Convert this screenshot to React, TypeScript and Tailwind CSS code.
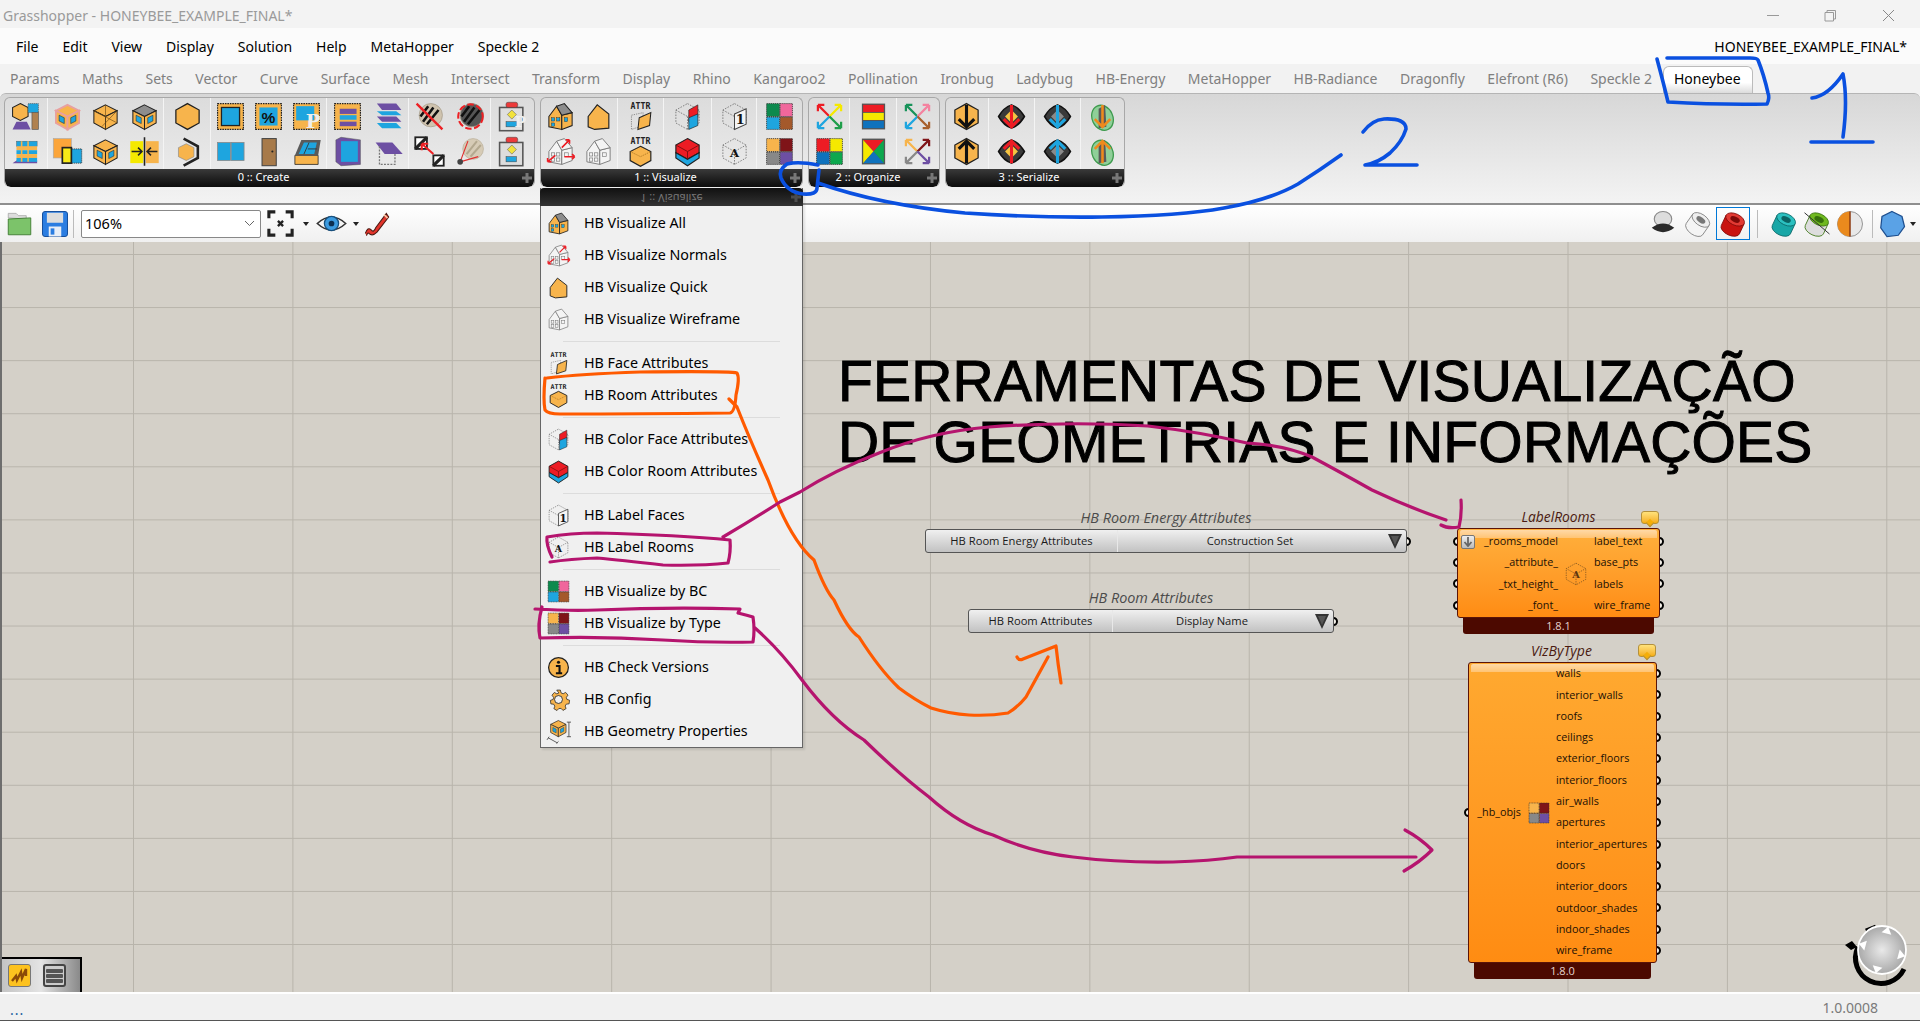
import React from "react";

const O = "#f7b44c", B = "#1ea5df", P = "#6d4fa3", K = "#222";
type N = React.ReactNode;
const Svg = ({ s = 31, children }: { s?: number; children: N }) => (
  <svg width={s} height={s} viewBox="0 0 24 24" className="shrink-0">{children}</svg>
);
const HEX = "12,2 21,7 21,17 12,22 3,17 3,7";
const Hex = ({ f = O, dash = false }: { f?: string; dash?: boolean }) => (
  <polygon points={HEX} fill={f} stroke={K} strokeWidth={dash ? 0.6 : 1} strokeDasharray={dash ? "1 1" : undefined} />
);
const Cube = ({ t = O, l = O, r = O, win = true, pink = false }: { t?: string; l?: string; r?: string; win?: boolean; pink?: boolean }) => (
  <g stroke={pink ? "#e8a0a0" : K} strokeWidth={pink ? 1.4 : 0.8}>
    <polygon points="12,3 21,7.5 12,12 3,7.5" fill={t} />
    <polygon points="3,7.5 12,12 12,22 3,17" fill={l} />
    <polygon points="21,7.5 12,12 12,22 21,17" fill={r} />
    {win && <polygon points="5.5,11 9.5,13 9.5,17.5 5.5,15.5" fill={B} strokeWidth={0.4} stroke={K} />}
    {win && <polygon points="18.5,11 14.5,13 14.5,17.5 18.5,15.5" fill={B} strokeWidth={0.4} stroke={K} />}
  </g>
);
const DashCube = () => (
  <g fill="none" stroke="#777" strokeWidth={0.7} strokeDasharray="1.2 1">
    <polygon points="12,2 21,7 21,17 12,22 3,17 3,7" />
    <path d="M3 7 L12 12 L21 7 M12 12 V22" />
  </g>
);
const House = ({ f = O, roof = "#8d8d8d", win = true, dash = false }: { f?: string; roof?: string; win?: boolean; dash?: boolean }) => (
  <g stroke={dash ? "#777" : K} strokeWidth={dash ? 0.7 : 0.8}>
    <polygon points="3,12 9,4 13,11 13,22 3,20" fill={f} />
    <polygon points="13,11 21,9 21,19 13,22" fill={f} />
    <polygon points="9,4 15,2 21,9 13,11" fill={roof} />
    {win && <g fill={B} strokeWidth={0.3}><rect x="5" y="13" width="2.5" height="2.5" /><rect x="9" y="13" width="2.5" height="2.5" /><rect x="5" y="17" width="2.5" height="2.5" /><rect x="15" y="13" width="2.5" height="3" /></g>}
    {dash && <g fill="none" strokeWidth={0.5}><rect x="5" y="13" width="2.5" height="2.5" /><rect x="9" y="13" width="2.5" height="2.5" /><rect x="5" y="17" width="2.5" height="2.5" /><rect x="9" y="17" width="2.5" height="2.5" /><rect x="15" y="13" width="3" height="3" /></g>}
  </g>
);
const Four = ({ c }: { c: string[] }) => (
  <g stroke="#333" strokeWidth={0.6} strokeDasharray="1 0.6">
    <rect x="2" y="2" width="10" height="10" fill={c[0]} />
    <rect x="12.5" y="2" width="9.5" height="10" fill={c[1]} />
    <rect x="2" y="12.5" width="10" height="9.5" fill={c[2]} />
    <rect x="12.5" y="12.5" width="9.5" height="9.5" fill={c[3]} />
  </g>
);
const Frame = ({ children, d = true }: { children?: N; d?: boolean }) => (
  <g>
    <rect x="2" y="2" width="20" height="20" fill={O} stroke={K} strokeWidth={0.9} strokeDasharray={d ? "1.2 0.7" : undefined} />
    {children}
  </g>
);
const Letter = ({ x = 12, y = 16, t, fs = 10, f = "#111" }: { x?: number; y?: number; t: string; fs?: number; f?: string }) => (
  <text x={x} y={y} textAnchor="middle" fontSize={fs} fontWeight="700" fontFamily="'DejaVu Serif',serif" fill={f}>{t}</text>
);
const Hatch = ({ f = "#cfc3ae" }: { f?: string }) => (
  <g>
    <ellipse cx="13" cy="11" rx="9" ry="9" fill={f} stroke="#a89f8f" strokeWidth={0.6} />
    <path d="M7 16 L15 5 M10 18 L19 7 M5 12 L11 4" stroke="#111" strokeWidth={2} fill="none" />
  </g>
);
const XArrows = ({ c }: { c: string[] }) => (
  <g fill="none" strokeWidth={1.7}>
    <path d="M12 12 L3 3 M3 3 H8 M3 3 V8" stroke={c[0]} />
    <path d="M12 12 L21 3 M21 3 H16 M21 3 V8" stroke={c[1]} />
    <path d="M12 12 L3 21 M3 21 H8 M3 21 V16" stroke={c[2]} />
    <path d="M12 12 L21 21 M21 21 H16 M21 21 V16" stroke={c[3]} />
  </g>
);
const ArrowV = ({ c, up = false, w = 2.4 }: { c: string; up?: boolean; w?: number }) => (
  <path d={up ? "M12 21 V4 M6 10 L12 4 L18 10" : "M12 3 V20 M6 14 L12 20 L18 14"} stroke={c} strokeWidth={w} fill="none" />
);
const Diamond = ({ c, up = false }: { c: string; up?: boolean }) => (
  <g>
    <path d="M12 3 Q18 5 22 12 Q18 19 12 21 Q6 19 2 12 Q6 5 12 3 Z" fill="#3a3a3a" stroke="#111" strokeWidth={1.2} />
    <polygon points="12,7 17,12 12,17 7,12" fill={c === "#ed1c24" ? "#f5c542" : "#8a8a8a"} />
    <ArrowV c={c} up={up} w={2.4} />
  </g>
);
const GreenBlob = ({ up = false }: { up?: boolean }) => (
  <g>
    <ellipse cx="12" cy="13" rx="8" ry="10" fill="#8fcf98" stroke="#3d9a4d" strokeWidth={1} transform="rotate(-25 12 13)" />
    <polygon points="9,6 14,3 15,20 9,21" fill="#5a5a5a" />
    <ArrowV c="#ef8a1d" up={up} w={2} />
  </g>
);
const Flow = ({ p = false }: { p?: boolean }) => (
  <g>
    <rect x="2" y="5" width="18" height="18" fill={p ? "none" : "#ddd"} stroke="#555" strokeWidth={1.2} />
    <rect x="7" y="1" width="9" height="4" rx="1.5" fill="#ec3b3b" stroke="#444" strokeWidth={0.4} />
    <polygon points="11.5,7 15,10.5 11.5,14 8,10.5" fill="#f2e23c" stroke="#555" strokeWidth={0.4} />
    <rect x="7" y="16" width="8" height="4" fill={B} stroke="#444" strokeWidth={0.4} />
    {p && <Letter x={18} y={20} t="P" fs={12} f="#eee" />}
  </g>
);
const Attr = ({ children }: { children: N }) => (
  <g>
    <text x="12" y="6" textAnchor="middle" fontSize="6.4" fontWeight="700" fontFamily="'DejaVu Sans Mono',monospace" fill="#222">ATTR</text>
    {children}
  </g>
);
const SmallHouse = () => <polygon points="4,12 11,3 20,10 20,21 9,22 4,20" fill={O} stroke={K} strokeWidth={0.9} />;
const Normals = () => (
  <g>
    <House f="#f4f4f4" roof="#f4f4f4" win={false} dash />
    <path d="M13 9 L19 3 M19 3 h-3 M19 3 v3 M8 15 L2 20 M2 20 h3 M2 20 v-3 M15 16 H23 M23 16 l-2-2 M23 16 l-2 2" stroke="#ed1c24" strokeWidth={1.2} fill="none" />
  </g>
);

const icons: Record<string, N> = {
  model: <g><polygon points="8,2 14,5 14,12 8,15 2,12 2,5" fill={O} stroke={K} strokeWidth={0.8} /><rect x="14" y="2" width="8" height="7" fill={B} stroke="#555" strokeWidth={0.5} strokeDasharray="1 0.5" /><rect x="17" y="9" width="5" height="13" fill="#b08150" stroke="#555" strokeWidth={0.5} /><polygon points="5,16 13,16 16,22 2,22" fill={P} /></g>,
  pinkCube: <Cube pink />,
  facetCube: <g><Cube win={false} /><path d="M3 7.5 L21 17 M12 3 L12 22 M21 7.5 L9 20" stroke="#6d4a16" strokeWidth={0.5} /></g>,
  grayCube: <Cube t="#8d8d8d" />,
  hex: <Hex />,
  frameBlue: <Frame><rect x="5" y="5" width="14" height="14" fill={B} stroke={K} strokeWidth={1} /></Frame>,
  framePct: <Frame><rect x="5" y="5" width="14" height="14" fill={B} /><text x="12" y="17" textAnchor="middle" fontSize="12" fontWeight="700" fontFamily="'Liberation Sans',sans-serif" fill="#111">%</text></Frame>,
  frameP: <Frame><rect x="4" y="4" width="14" height="11" fill={B} /><Letter x={17} y={21} t="P" fs={15} f="#eee" /></Frame>,
  frameStack: <Frame><rect x="6" y="6" width="13" height="4" fill={P} /><rect x="6" y="11" width="13" height="3.5" fill={B} /><rect x="6" y="16" width="13" height="3.5" fill={P} /></Frame>,
  stacks: <g><polygon points="3,2 18,2 22,7 7,7" fill={P} /><polygon points="3,8 18,8 22,11 7,11" fill={B} /><polygon points="3,12 18,12 22,16 7,16" fill={P} /><polygon points="3,17 18,17 22,21 7,21" fill={B} /></g>,
  hatchSlash: <g><Hatch /><path d="M2 2 L22 22" stroke="#ed2024" strokeWidth={1.8} /></g>,
  hatchRing: <g><Hatch f="#555" /><circle cx="12" cy="12" r="9.5" fill="none" stroke="#ed2024" strokeWidth={1.6} strokeDasharray="5 2" /></g>,
  flowP: <Flow p />,
  building: <g><polygon points="2,21 5,19 21,19 21,21" fill={P} /><rect x="5" y="4" width="16" height="4" fill={B} stroke="#555" strokeWidth={0.3} /><rect x="5" y="8" width="16" height="3" fill={O} /><rect x="5" y="11" width="16" height="3" fill={B} /><rect x="5" y="14" width="16" height="3" fill={O} /><rect x="5" y="17" width="16" height="3" fill={B} /><path d="M9 4 V20 M14 4 V20" stroke={O} strokeWidth={1.2} /></g>,
  orangeYellow: <g><rect x="1" y="2" width="14" height="15" fill="#fba53a" stroke="#aaa" strokeWidth={0.5} /><rect x="12" y="10" width="11" height="11" fill={B} stroke="#333" strokeWidth={0.6} strokeDasharray="1 .6" /><rect x="8" y="9" width="7" height="12" fill="#f8ea18" stroke={K} strokeWidth={1.3} /></g>,
  blueCube: <Cube />,
  split: <g><rect x="1" y="4" width="10" height="17" fill="#f5e900" /><rect x="13" y="4" width="10" height="17" fill={O} /><path d="M2 12 H10 M7 9 l3 3 l-3 3 M22 12 H14 M17 9 l-3 3 l3 3 M12 1 V23" stroke={K} strokeWidth={1.2} fill="none" /></g>,
  hexBracket: <g><polygon points="11,6 17,9 17,16 11,19 5,16 5,9" fill={O} stroke="#888" strokeWidth={0.5} /><path d="M9 2 L20 8 V17 L9 23" stroke={K} strokeWidth={2} fill="none" /></g>,
  panels: <g><rect x="2" y="5" width="10" height="14" fill={B} stroke="#888" strokeWidth={0.6} /><rect x="12.5" y="5" width="10" height="14" fill={B} stroke="#888" strokeWidth={0.6} /></g>,
  door: <g><rect x="7" y="2" width="11" height="21" fill="#a77a4a" stroke="#444" strokeWidth={0.8} /><circle cx="15" cy="12" r="0.8" fill="#222" /></g>,
  skylight: <g><polygon points="3,15 21,15 21,22 3,22" fill={O} stroke={K} strokeWidth={0.6} /><polygon points="3,15 8,3 23,3 21,15" fill="#5a5a5a" /><polygon points="6,14 10,5 20,5 18,14" fill={B} /><path d="M10 14 L14 5 M13 10 H20" stroke="#333" strokeWidth={0.7} /></g>,
  purpleCube: <g><polygon points="3,3 7,1 22,3 22,22 7,23 3,20" fill={P} stroke="#555" strokeWidth={0.4} /><rect x="7" y="4" width="13" height="16" fill={B} /></g>,
  para: <g><polygon points="2,5 15,5 23,14 9,14" fill={P} /><path d="M5 8 V22 H17 V14" fill="none" stroke="#777" strokeWidth={1} strokeDasharray="1.5 1" /></g>,
  hatchSquares: <g><rect x="1" y="1" width="9" height="9" fill="#fff" stroke={K} strokeWidth={1.4} /><path d="M1 10 L10 1" stroke={K} strokeWidth={2.5} /><rect x="15" y="15" width="8" height="8" fill="#fff" stroke={K} strokeWidth={1.4} /><path d="M15 23 L23 15" stroke={K} strokeWidth={2.5} /><path d="M6 6 L15 14 M6 6 h5 M6 6 v5" stroke="#ed2024" strokeWidth={1.6} fill="none" /></g>,
  hatchLine: <g><ellipse cx="14" cy="10" rx="8" ry="8" fill="#d6cbb6" stroke="#bdb29e" strokeWidth={0.6} /><path d="M9 14 L17 4 M12 16 L20 7" stroke="#b3a88f" strokeWidth={1.6} /><path d="M4 20 L10 4 M4 20 L18 16" stroke="#e03030" strokeWidth={0.9} fill="none" /><circle cx="4" cy="20" r="2.2" fill="#444" /></g>,
  flow: <Flow />,
  house: <House />,
  houseQuick: <SmallHouse />,
  attrBox: <Attr><g stroke="#777" strokeWidth={0.6} strokeDasharray="1 .8" fill="none"><polygon points="5,11 14,9 14,19 5,22" /></g><polygon points="11,13 20,9 19,19 10,22" fill={O} stroke={K} strokeWidth={0.8} /></Attr>,
  attrHex: <Attr><polygon points="12,8 20,12 20,19 12,23.5 4,19 4,12" fill={O} stroke={K} strokeWidth={0.9} /><path d="M4 12 L12 16 L20 12" stroke="#8a5a10" strokeWidth={0.5} strokeDasharray="1 .8" fill="none" /></Attr>,
  colorFace: <g><DashCube /><polygon points="13,7 20,3 20,12 13,16" fill="#ed1c24" stroke={K} strokeWidth={0.5} /><polygon points="13,13 20,10 20,19 13,22" fill={B} stroke={K} strokeWidth={0.5} /></g>,
  colorRoom: <g><polygon points="12,2 21,7 21,13 12,18 3,13 3,7" fill="#ed1c24" stroke={K} strokeWidth={0.9} /><polygon points="3,13 12,18 21,13 21,17 12,23 3,17" fill={B} stroke={K} strokeWidth={0.9} /><path d="M3 7 L12 12 L21 7 M12 12 V18" stroke="#7a0d0d" strokeWidth={0.7} fill="none" /></g>,
  labelFace: <g><DashCube /><polygon points="12,10 21,6 21,18 12,22" fill="#f4f4f4" stroke="#444" strokeWidth={0.8} /><Letter x={16.5} y={18} t="1" fs={10} /></g>,
  labelRoom: <g><DashCube /><Letter x={12} y={16} t="A" fs={9} /></g>,
  bc: <Four c={["#0d8a4e", "#f0679c", B, "#a4592b"]} />,
  type: <Four c={[O, "#7f1418", "#888", P]} />,
  normals: <Normals />,
  wire: <House f="#f4f4f4" roof="#f4f4f4" win={false} dash />,
  arrowsA: <XArrows c={["#ed1c24", "#f5e900", B, "#1f9e4a"]} />,
  arrowsB: <XArrows c={["#18935a", "#f4829f", B, "#a8602d"]} />,
  arrowsC: <XArrows c={[O, "#7f1418", "#888", P]} />,
  stripes: <g><rect x="3" y="2" width="18" height="20" fill="#555" /><rect x="4" y="3" width="16" height="5.5" fill="#ed1c24" /><rect x="4" y="9.2" width="16" height="5.5" fill="#f5e900" /><rect x="4" y="15.5" width="16" height="5.5" fill="#0f72bd" /></g>,
  foursq: <Four c={["#ed1c24", "#f5e900", "#0f72bd", "#0da84e"]} />,
  xtri: <g><rect x="3" y="2" width="18" height="20" fill="#555" /><polygon points="4,3 20,3 12,12" fill="#ed1c24" /><polygon points="4,3 12,12 4,21" fill="#f5e900" /><polygon points="20,3 12,12 20,21" fill="#0da84e" /><polygon points="4,21 12,12 20,21" fill="#0f72bd" /></g>,
  hexDown: <g><Hex /><ArrowV c="#111" /></g>,
  hexUp: <g><Hex /><ArrowV c="#111" up /></g>,
  dRedD: <Diamond c="#ed1c24" />,
  dRedU: <Diamond c="#ed1c24" up />,
  dBlueD: <Diamond c={B} />,
  dBlueU: <Diamond c={B} up />,
  gD: <GreenBlob />,
  gU: <GreenBlob up />,
  info: <g><circle cx="12" cy="12" r="9.5" fill={O} stroke={K} strokeWidth={1.2} /><circle cx="12" cy="7" r="1.5" fill="#111" /><path d="M9.5 10.5 H13 V17 M9.5 17.5 H15.5" stroke="#111" strokeWidth={2} fill="none" /></g>,
  gear: <g><path d="M10 2 h4 l.7 3 2.3 1 2.7-1.5 2.6 3 -1.8 2.4 .5 2.2 3 1 -.5 3.9 -3 .3 -1.3 2.1 1 2.8 -3.4 2 -2-2.2 -2.5.1 -2 2.2 -3.4-2 1-2.8 -1.3-2.1 -3-.3 -.5-3.9 3-1 .5-2.2 -1.8-2.4 2.6-3 2.7 1.5 2.3-1z" fill={O} stroke={K} strokeWidth={0.8} transform="translate(1.5 1.2) scale(.88)" /><circle cx="12" cy="12" r="3.8" fill="#f0f0f0" stroke={K} strokeWidth={0.8} /></g>,
  geom: <g><g transform="translate(2 -1) scale(.82)"><Cube /></g><path d="M22 3 V17 M20 3 h4 M20 17 h4 M2 18 L11 23 M1 20 l2-3 M10 23.5 l2-2" stroke="#444" strokeWidth={0.8} fill="none" /></g>,
};

const Ic = ({ n, s = 31 }: { n: string; s?: number }) => <Svg s={s}>{icons[n]}</Svg>;

type Panel = { label: string; cls: string; groups: { cls: string; cols: [string, string][] }[] };
const panels: Panel[] = [
  {
    label: "0 :: Create",
    cls: "w-[531px]",
    groups: [
      { cls: "w-[43px]", cols: [["model", "building"]] },
      { cls: "w-[117px]", cols: [["pinkCube", "orangeYellow"], ["facetCube", "blueCube"], ["grayCube", "split"]] },
      { cls: "w-[47px]", cols: [["hex", "hexBracket"]] },
      { cls: "w-[116px]", cols: [["frameBlue", "panels"], ["framePct", "door"], ["frameP", "skylight"]] },
      { cls: "w-[83px]", cols: [["frameStack", "purpleCube"], ["stacks", "para"]] },
      { cls: "w-[82px]", cols: [["hatchSlash", "hatchSquares"], ["hatchRing", "hatchLine"]] },
      { cls: "w-[43px]", cols: [["flowP", "flow"]] },
    ],
  },
  {
    label: "1 :: Visualize",
    cls: "w-[263px]",
    groups: [
      { cls: "w-[78px]", cols: [["house", "normals"], ["houseQuick", "wire"]] },
      { cls: "w-[46px]", cols: [["attrBox", "attrHex"]] },
      { cls: "w-[48px]", cols: [["colorFace", "colorRoom"]] },
      { cls: "w-[46px]", cols: [["labelFace", "labelRoom"]] },
      { cls: "w-[45px]", cols: [["bc", "type"]] },
    ],
  },
  {
    label: "2 :: Organize",
    cls: "w-[132px]",
    groups: [
      { cls: "w-[42px]", cols: [["arrowsA", "foursq"]] },
      { cls: "w-[47px]", cols: [["stripes", "xtri"]] },
      { cls: "w-[43px]", cols: [["arrowsB", "arrowsC"]] },
    ],
  },
  {
    label: "3 :: Serialize",
    cls: "w-[180px]",
    groups: [
      { cls: "w-[43px]", cols: [["hexDown", "hexUp"]] },
      { cls: "w-[47px]", cols: [["dRedD", "dRedU"]] },
      { cls: "w-[46px]", cols: [["dBlueD", "dBlueU"]] },
      { cls: "w-[44px]", cols: [["gD", "gU"]] },
    ],
  },
];

const tabs = ["Params", "Maths", "Sets", "Vector", "Curve", "Surface", "Mesh", "Intersect", "Transform", "Display", "Rhino", "Kangaroo2", "Pollination", "Ironbug", "Ladybug", "HB-Energy", "MetaHopper", "HB-Radiance", "Dragonfly", "Elefront (R6)", "Speckle 2"];
const menus = ["File", "Edit", "View", "Display", "Solution", "Help", "MetaHopper", "Speckle 2"];

const menuGroups: [string, string][][] = [
  [["house", "HB Visualize All"], ["normals", "HB Visualize Normals"], ["houseQuick", "HB Visualize Quick"], ["wire", "HB Visualize Wireframe"]],
  [["attrBox", "HB Face Attributes"], ["attrHex", "HB Room Attributes"]],
  [["colorFace", "HB Color Face Attributes"], ["colorRoom", "HB Color Room Attributes"]],
  [["labelFace", "HB Label Faces"], ["labelRoom", "HB Label Rooms"]],
  [["bc", "HB Visualize by BC"], ["type", "HB Visualize by Type"]],
  [["info", "HB Check Versions"], ["gear", "HB Config"], ["geom", "HB Geometry Properties"]],
];

const Plus = () => (
  <svg width="10" height="10" viewBox="0 0 10 10"><path d="M5 0 V10 M0 5 H10" stroke="#777" strokeWidth="3" /></svg>
);

const Socket = ({ side }: { side: "l" | "r" }) => (
  <span className={`absolute top-1/2 -mt-[4.5px] w-[9px] h-[9px] rounded-full border-2 border-black bg-[#f4f0e8] -z-10 ${side === "l" ? "-left-[5px]" : "-right-[5px]"}`} />
);

const Balloon = ({ cls }: { cls: string }) => (
  <div className={`absolute ${cls} w-[18px] h-[13px] rounded-[3px] border border-[#b4913c] bg-gradient-to-b from-[#ffe27a] to-[#f5ae08]`}>
    <span className="absolute left-[5px] top-[8px] w-[6px] h-[6px] rotate-45 bg-[#f5ae08] border-r border-b border-[#b4913c]" />
  </div>
);

const Shine = () => (
  <span className="absolute left-[2px] right-[2px] top-[1px] h-[8px] rounded-t-[2px] bg-gradient-to-b from-[#ffd9a6] to-[#ffc474]" />
);

const nodeFont = "font-['Open_Sans',sans-serif] text-[10.8px] leading-none text-[#1a1005]";

const ValueList = ({ cls, title, a, b, aw, pr }: { cls: string; title: string; a: string; b: string; aw: string; pr: string }) => (
  <div className={`absolute ${cls}`}>
    <div className="absolute -top-[18px] left-0 right-0 text-center italic text-[14.4px] leading-none text-[#4b4b4b] font-['Open_Sans',sans-serif]">{title}</div>
    <div className="relative h-[24px] flex items-center rounded-[3px] border border-[#555] bg-gradient-to-b from-[#f0f0f0] to-[#c2c2c2] text-[11.2px] text-[#1a1a1a] font-['Open_Sans',sans-serif]">
      <div className={`${aw} h-full flex items-center justify-center border-r border-[#e8e8e8]`}>{a}</div>
      <div className={`flex-1 text-center ${pr}`}>{b}</div>
      <svg className="absolute right-[4px] top-[4px]" width="14" height="15" viewBox="0 0 14 15"><polygon points="0,0 14,0 7,15" fill="#333" /><polygon points="3,2 11,2 7,11" fill="#555" /></svg>
      <Socket side="r" />
    </div>
  </div>
);

const vizOut = ["walls", "interior_walls", "roofs", "ceilings", "exterior_floors", "interior_floors", "air_walls", "apertures", "interior_apertures", "doors", "interior_doors", "outdoor_shades", "indoor_shades", "wire_frame"];
const lrIn = ["_rooms_model", "_attribute_", "_txt_height_", "_font_"];
const lrOut = ["label_text", "base_pts", "labels", "wire_frame"];

const Canvas = () => (
  <div className="relative flex-1 isolate border-l-2 border-[#6e6e6e] bg-[#d4d0c8] bg-[linear-gradient(to_right,#b8b4ab_1px,transparent_1px),linear-gradient(to_bottom,#b8b4ab_1px,transparent_1px)] bg-[size:159.4px_53.08px] bg-[position:131px_12px] overflow-hidden">
    <div className="absolute left-[836px] top-[109px] text-[57px] tracking-[0.2px] leading-[61px] text-black whitespace-nowrap font-['Liberation_Sans',sans-serif] [-webkit-text-stroke:1px_black]">
      <div>FERRAMENTAS DE VISUALIZAÇÃO</div>
      <div>DE GEOMETRIAS E INFORMAÇÕES</div>
    </div>

    <ValueList cls="left-[923px] top-[287px] w-[482px]" title="HB Room Energy Attributes" a="HB Room Energy Attributes" b="Construction Set" aw="w-[192px]" pr="pr-[24px]" />
    <ValueList cls="left-[966px] top-[367px] w-[366px]" title="HB Room Attributes" a="HB Room Attributes" b="Display Name" aw="w-[144px]" pr="pr-[22px]" />

    <div className={`absolute left-[1455px] top-[286px] w-[203px] ${nodeFont}`}>
      <div className="absolute -top-[18px] left-0 right-0 text-center italic text-[13.8px] text-[#4a1a10]">LabelRooms</div>
      <Balloon cls="left-[184px] -top-[17px]" />
      <div className="relative h-[90px] rounded-[3px] border border-[#5a1408] bg-gradient-to-b from-[#ffb03c] to-[#ff8c12] flex pt-[2px]">
        <Shine />
        <div className="relative w-[100px] flex flex-col">
          {lrIn.map((t) => (
            <div key={t} className="relative h-[21.2px] flex items-center justify-end">{t}<span className="absolute -left-[5px] top-1/2 -mt-[4.5px] w-[9px] h-[9px] rounded-full border-2 border-black bg-[#f4f0e8] -z-10" /></div>
          ))}
        </div>
        <div className="w-[36px] flex items-center justify-center"><svg width="26" height="26" viewBox="0 0 24 24"><g fill="none" stroke="#8a5a20" strokeWidth="0.8" strokeDasharray="1.2 1"><polygon points={HEX} /><path d="M3 7 L12 12 L21 7 M12 12 V22" /></g><text x="12" y="16" textAnchor="middle" fontSize="9" fontWeight="700" fontFamily="'DejaVu Serif',serif" fill="#5a3410">A</text></svg></div>
        <div className="flex-1 flex flex-col">
          {lrOut.map((t) => (
            <div key={t} className="relative h-[21.2px] flex items-center">{t}<span className="absolute -right-[5px] top-1/2 -mt-[4.5px] w-[9px] h-[9px] rounded-full border-2 border-black bg-[#f4f0e8] -z-10" /></div>
          ))}
        </div>
        <span className="absolute left-[3px] top-[6px] w-[14px] h-[14px] rounded-[2px] border border-[#777] bg-gradient-to-b from-[#eee] to-[#bbb] flex items-center justify-center">
          <svg width="10" height="10" viewBox="0 0 10 10"><path d="M5 0 V8 M1.5 5 L5 9 L8.5 5" stroke="#666" strokeWidth="1.8" fill="none" /></svg>
        </span>
      </div>
      <div className="mx-[6px] h-[16px] rounded-b-[3px] bg-[#4c0900] text-[#e6d3cc] text-center text-[11px] leading-[15px]">1.8.1</div>
    </div>

    <div className={`absolute left-[1466px] top-[420px] w-[189px] ${nodeFont}`}>
      <div className="absolute -top-[18px] left-[-2px] right-0 text-center italic text-[14px] text-[#4a1a10]">VizByType</div>
      <Balloon cls="left-[170px] -top-[18px]" />
      <div className="relative h-[301px] rounded-[3px] border border-[#5a1408] bg-gradient-to-b from-[#ffa930] to-[#ff8c12] flex">
        <Shine />
        <div className="relative w-[52px] self-center flex items-center justify-end">_hb_objs<span className="absolute -left-[5px] top-1/2 -mt-[4.5px] w-[9px] h-[9px] rounded-full border-2 border-black bg-[#f4f0e8] -z-10" /></div>
        <div className="w-[35px] self-center flex items-center justify-center"><Ic n="type" s={24} /></div>
        <div className="relative flex-1 flex flex-col">
          {vizOut.map((t) => (
            <div key={t} className="relative h-[21.3px] flex items-center">{t}<span className="absolute -right-[5px] top-1/2 -mt-[4.5px] w-[9px] h-[9px] rounded-full border-2 border-black bg-[#f4f0e8] -z-10" /></div>
          ))}
        </div>
      </div>
      <div className="mx-[6px] h-[16px] rounded-b-[3px] bg-[#4c0900] text-[#e6d3cc] text-center text-[11px] leading-[15px]">1.8.0</div>
    </div>

    <div className="absolute left-0 bottom-0 w-[80px] h-[35px] border-t-2 border-r-2 border-black bg-gradient-to-r from-[#c4c4c4] via-[#e4e4e4] to-[#8a8a8a] flex items-center gap-[12px] pl-[6px]">
      <div className="w-[23px] h-[23px] rounded-[3px] border border-[#777] bg-[#fdc21f] flex items-center justify-center">
        <svg width="20" height="20" viewBox="0 0 20 20"><path d="M2 15 L6 10 L7 14 L11 6 L12 12 L16 3 L16 10" stroke="#8c4a08" strokeWidth="2.4" fill="none" /></svg>
      </div>
      <div className="w-[23px] h-[23px] rounded-[3px] border-2 border-[#444] bg-[#ccc] flex flex-col justify-center gap-[1px] px-[1px]">
        <span className="h-[4px] bg-[#555] rounded-[1px]" />
        <span className="h-[4px] bg-[#555] rounded-[1px]" />
        <span className="h-[4px] bg-[#555] rounded-[1px]" />
      </div>
    </div>

    <svg className="absolute left-[1840px] top-[675px]" width="74" height="72" viewBox="0 0 74 72">
      <defs>
        <radialGradient id="nav"><stop offset="0" stopColor="#e9e9e9" /><stop offset="1" stopColor="#a9a9a9" /></radialGradient>
      </defs>
      <path d="M16 30 A25 25 0 0 0 62 52" stroke="#000" strokeWidth="5" fill="none" />
      <path d="M24 14 L34 10" stroke="#000" strokeWidth="5" />
      <polygon points="3,28 10,24 15,30 9,33" fill="#000" />
      <circle cx="40" cy="33" r="24" fill="url(#nav)" stroke="#fff" strokeWidth="1.8" />
      <polygon points="40,9 35,16 45,16" fill="#fff" transform="rotate(15 40 33)" />
      <polygon points="40,9 35,16 45,16" fill="#fff" transform="rotate(105 40 33)" />
      <polygon points="40,9 35,16 45,16" fill="#fff" transform="rotate(195 40 33)" />
      <polygon points="40,9 35,16 45,16" fill="#fff" transform="rotate(285 40 33)" />
    </svg>
  </div>
);

const Cyl = ({ a, b, top, tilt = 25 }: { a: string; b: string; top: string; tilt?: number }) => (
  <g transform={`rotate(${tilt} 12 12)`}>
    <path d="M4 8 V17 A8 4.5 0 0 0 20 17 V8 Z" fill={a} stroke={b} strokeWidth={0.6} />
    <ellipse cx="12" cy="8" rx="8" ry="4.5" fill={top} stroke={b} strokeWidth={0.6} />
    <ellipse cx="12" cy="8" rx="4" ry="2.2" fill={b} />
  </g>
);

const Toolbar = () => (
  <div className="relative h-[39px] shrink-0 border-t-2 border-[#8f8f8f] bg-gradient-to-b from-white to-[#f0f0f0] flex items-center">
    <div className="w-[6px]" />
    <Svg s={27}><path d="M2 7 V3 H9 L11 5 H18 V8 Z" fill="#ddd" stroke="#999" strokeWidth={0.6} /><path d="M2 8 L22 7 V22 H2 Z" fill="#7cc36a" stroke="#3d7a30" strokeWidth={0.8} /></Svg>
    <div className="w-[7px]" />
    <Svg s={30}><rect x="2" y="2" width="20" height="20" rx="2" fill="#2b7de1" stroke="#164f9c" strokeWidth={0.8} /><rect x="5.5" y="3" width="13" height="8" fill="#ddd" /><rect x="7" y="14" width="10" height="8" fill="#e8eef7" /><rect x="8.5" y="15.5" width="3" height="5" fill="#2b7de1" /></Svg>
    <div className="w-[4px] h-[28px] border-r border-[#bbb] mr-[7px]" />
    <div className="w-[180px] h-[28px] border border-[#888] rounded-[2px] bg-white flex items-center justify-between pl-[3px] pr-[5px] text-[14.5px] text-black font-['Noto_Sans',sans-serif]">
      <span>106%</span>
      <svg width="11" height="7" viewBox="0 0 11 7"><path d="M1 1 L5.5 5.5 L10 1" stroke="#666" strokeWidth="1" fill="none" /></svg>
    </div>
    <div className="w-[4px]" />
    <Svg s={31}><path d="M3 8 V3 H8 M16 3 H21 V8 M21 16 V21 H16 M8 21 H3 V16" stroke="#222" strokeWidth={2.4} fill="none" /><path d="M10 10 L14 14 M14 10 L10 14" stroke="#222" strokeWidth={1.8} /></Svg>
    <svg className="ml-[7px]" width="6" height="4" viewBox="0 0 6 4"><polygon points="0,0 6,0 3,4" fill="#222" /></svg>
    <div className="w-[7px]" />
    <Svg s={31}><path d="M1 12 Q12 2 23 12 Q12 22 1 12 Z" fill="#f4f4f4" stroke="#333" strokeWidth={1.2} /><circle cx="12" cy="12" r="5.5" fill="#3b9be0" stroke="#17507e" strokeWidth={1} /><circle cx="12" cy="12" r="2.2" fill="#0d2f50" /></Svg>
    <svg className="ml-[6px]" width="6" height="4" viewBox="0 0 6 4"><polygon points="0,0 6,0 3,4" fill="#222" /></svg>
    <div className="w-[4px]" />
    <Svg s={28}><path d="M2 20 Q4 14 7 17 Q9 20 11 15 L20 3 L22 6 L12 19 Q8 23 5 20 Q4 19 3 22" fill="#e2342b" stroke="#4a1a12" strokeWidth={0.9} /><path d="M18 4 L21 7" stroke="#f6c8a8" strokeWidth={1.4} /></Svg>

    <div className="ml-auto flex items-center pr-[4px]">
      <Svg s={30}><ellipse cx="12" cy="8" rx="7" ry="6" fill="#ddd" stroke="#888" strokeWidth={0.9} /><path d="M3 15 Q12 8 21 15 Q12 22 3 15 Z" fill="#2a2a2a" /></Svg>
      <div className="w-[5px]" />
      <Svg s={30}><Cyl a="#f4f4f4" b="#777" top="#eee" tilt={35} /></Svg>
      <div className="w-[3px]" />
      <div className="w-[34px] h-[33px] border border-[#0078d7] flex items-center justify-center"><Svg s={30}><Cyl a="#c8130f" b="#7f0a08" top="#e23a33" /></Svg></div>
      <div className="w-[8px] h-[28px] border-r border-[#bbb] mr-[11px]" />
      <Svg s={30}><Cyl a="#18a6a6" b="#0b6464" top="#2bc0c0" /></Svg>
      <div className="w-[3px]" />
      <Svg s={30}><Cyl a="#ddd" b="#36700c" top="#6fb81f" /><path d="M2 3 L22 20" stroke="#333" strokeWidth={0.8} /></Svg>
      <div className="w-[3px]" />
      <Svg s={30}><circle cx="12" cy="12" r="10" fill="#e8e8e8" stroke="#777" strokeWidth={0.6} /><path d="M12 2 A10 10 0 0 0 12 22 Z" fill="#ea8a1d" /><path d="M12 2 V22" stroke="#8c3a10" strokeWidth={1.2} /></Svg>
      <div className="w-[8px] h-[28px] border-r border-[#bbb] mr-[4px]" />
      <Svg s={30}><polygon points="12,2 20,6 22,14 17,21 8,22 3,15 4,6" fill="#5aa2e6" stroke="#1d4f8f" strokeWidth={1} /></Svg>
      <svg className="ml-[3px]" width="6" height="4" viewBox="0 0 6 4"><polygon points="0,0 6,0 3,4" fill="#222" /></svg>
    </div>
  </div>
);

const Annotations = () => (
  <svg className="absolute inset-0 pointer-events-none z-30" width="1920" height="1021" viewBox="0 0 1920 1021" fill="none" strokeLinecap="round" strokeLinejoin="round">
    <g stroke="#0a50e0" strokeWidth="3.6">
      <path d="M1657 59 Q1664 85 1668 102 Q1720 105 1767 104 Q1770 98 1768 93 Q1764 75 1758 60 Q1757 58 1750 58 L1667 58" />
      <path d="M1812 98 Q1828 96 1843 74 Q1848 100 1843 137" />
      <path d="M1811 142 H1873" />
      <path d="M818 165 Q798 161 787 164 Q778 170 781 178 Q787 192 803 194 Q817 195 817 188 L819 170" />
      <path d="M818 183 Q880 205 965 213 Q1040 218 1102 217 Q1180 216 1224 208 Q1270 200 1298 184 Q1320 170 1341 155" />
      <path d="M1363 132 Q1372 120 1384 119 Q1406 118 1406 129 Q1402 142 1390 153 Q1378 163 1365 165 H1417" />
    </g>
    <g stroke="#ff5a00" strokeWidth="3.2">
      <path d="M545 378 Q543 400 545 410 Q548 414 560 414 Q640 414 730 413 Q735 412 736 395 Q740 378 737 373 Q730 371 640 372 Q580 374 547 378" />
      <path d="M729 399 L737 407 Q750 440 768 480 Q790 540 814 560 Q825 590 834 600 Q848 630 859 637 Q880 670 899 688 Q915 700 931 708 Q950 714 969 715 Q990 716 1008 713 Q1018 707 1026 697 Q1038 675 1048 657" />
      <path d="M1017 657 Q1019 661 1023 659 L1056 646 Q1058 665 1061 683" />
    </g>
    <g stroke="#b5146e" strokeWidth="3.2">
      <path d="M552 557 Q546 545 547 537 Q570 533 597 533 Q680 535 730 540 Q731 552 728 563 Q700 566 663 565 Q620 560 597 558 Q570 559 550 562" />
      <path d="M723 537 Q752 520 780 502 L800 492 Q835 470 879 453 Q930 432 989 427 Q1070 421 1148 426 Q1200 432 1247 443 Q1285 445 1312 457 Q1340 472 1372 490 Q1410 508 1446 520" />
      <path d="M1461 500 Q1462 515 1459 527 Q1448 529 1441 525" />
      <path d="M535 609 Q570 611 597 610 Q670 607 740 609 L738 613 Q746 615 753 617 Q755 630 753 642 Q710 643 663 640 Q600 636 540 638 Q537 625 542 607" />
      <path d="M755 628 Q780 650 802 680 Q832 720 864 740 Q900 775 929 797 Q960 825 993 835 Q1030 852 1073 857 Q1120 863 1173 862 Q1210 861 1237 857 H1416" />
      <path d="M1405 830 Q1420 838 1432 850 Q1420 862 1404 871" />
    </g>
  </svg>
);

export default function App() {
  return (
    <div className="relative w-[1920px] h-[1021px] overflow-hidden flex flex-col bg-[#f2f2f2] font-['Noto_Sans',sans-serif]">
      <div className="h-[28px] shrink-0 bg-[#f3f3f3] flex items-center justify-between pl-[3px] pt-[2px]">
        <span className="text-[14px] text-[#9a9a9a]">Grasshopper - HONEYBEE_EXAMPLE_FINAL*</span>
        <div className="flex items-center gap-[45px] pr-[25px]">
          <span className="w-[12px] h-px bg-[#999]" />
          <svg width="13" height="13" viewBox="0 0 13 13"><path d="M3 3 V1.5 H11.5 V10 H10 M1 3.5 H9.5 V12 H1 Z" stroke="#999" fill="none" /></svg>
          <svg width="13" height="13" viewBox="0 0 13 13"><path d="M1 1 L12 12 M12 1 L1 12" stroke="#888" fill="none" /></svg>
        </div>
      </div>
      <div className="h-[36px] shrink-0 bg-[#fbfbfb] flex items-center pl-[16px] gap-[24px] text-[14px] text-black">
        {menus.map((m) => <span key={m}>{m}</span>)}
        <span className="ml-auto pr-[13px]">HONEYBEE_EXAMPLE_FINAL*</span>
      </div>
      <div className="h-[29px] shrink-0 bg-[#f2f2f2] flex items-end pl-[10px] text-[14px] text-[#808080]">
        <div className="flex gap-[22.5px] h-full items-center">
          {tabs.map((t) => <span key={t}>{t}</span>)}
        </div>
        <div className="ml-[11px] w-[90px] h-[27px] border border-b-0 border-[#bbb] rounded-t-[6px] bg-gradient-to-b from-white from-60% to-[#dcdcdc] text-black pl-[10px] leading-[24px]">Honeybee</div>
      </div>
      <div className="h-[110px] shrink-0 border-t border-[#b5b5b5] rounded-t-[6px] bg-gradient-to-b from-[#d7d7d7] to-[#f3f3f3] pt-[3px] pl-[4px] flex gap-[5px]">
        {panels.map((p) => (
          <div key={p.label} className={`${p.cls} h-[90px] rounded-[6px] border border-[#a8a8a8] border-b-0 flex flex-col bg-gradient-to-b from-[#dcdcdc] to-[#ededed] overflow-hidden`}>
            <div className="h-[71px] flex">
              {p.groups.map((g, i) => (
                <div key={i} className={`${g.cls} flex justify-around border-r border-[#f4f4f4] last:border-r-0 py-[2.5px]`}>
                  {g.cols.map((c, j) => (
                    <div key={j} className="flex flex-col justify-between">
                      <Ic n={c[0]} />
                      <Ic n={c[1]} />
                    </div>
                  ))}
                </div>
              ))}
            </div>
            <div className="relative h-[18px] bg-gradient-to-b from-[#3a3a3a] to-[#0c0c0c] rounded-b-[6px] flex items-center justify-center text-[11px] text-white pr-[12px] pb-[2px]">
              {p.label}
              <span className="absolute right-[2px] top-[4px]"><Plus /></span>
            </div>
          </div>
        ))}
      </div>
      <Toolbar />
      <Canvas />
      <div className="h-[29px] shrink-0 border-t-2 border-white border-b border-b-[#555] bg-[#f0f0f0] flex items-center justify-between pl-[10px] pr-[42px]">
        <span className="text-[14px] leading-none tracking-[1px] text-[#1a5fa0] pt-[6px]">...</span>
        <span className="text-[14px] text-[#7a7a7a]">1.0.0008</span>
      </div>

      <div className="absolute z-20 left-[540px] top-[188px] w-[263px] h-[560px] border border-[#666] border-t-0 bg-[#f0f0f0] text-[14.3px] text-black shadow-[2px_2px_2px_rgba(0,0,0,0.1)]">
        <div className="relative h-[18px] bg-gradient-to-b from-[#111] to-[#333] -mx-px flex items-center justify-center text-[11px] text-[#777] rounded-t-[4px]">
          <span className="-scale-y-100">1 :: Visualize</span>
          <span className="absolute right-[2px] top-[4px] -scale-y-100 opacity-50"><Plus /></span>
        </div>
        {menuGroups.map((g, i) => (
          <div key={i} className={i > 0 ? "relative pt-[12px] before:absolute before:left-[22px] before:right-[22px] before:top-[6px] before:h-px before:bg-[#dcdcdc]" : "pt-[1px]"}>
            {g.map(([ic, t]) => (
              <div key={t} className="h-[32px] flex items-center">
                <div className="w-[34px] mr-[9px] flex justify-center"><Ic n={ic} s={25} /></div>
                <span>{t}</span>
              </div>
            ))}
          </div>
        ))}
      </div>

      <Annotations />
    </div>
  );
}
